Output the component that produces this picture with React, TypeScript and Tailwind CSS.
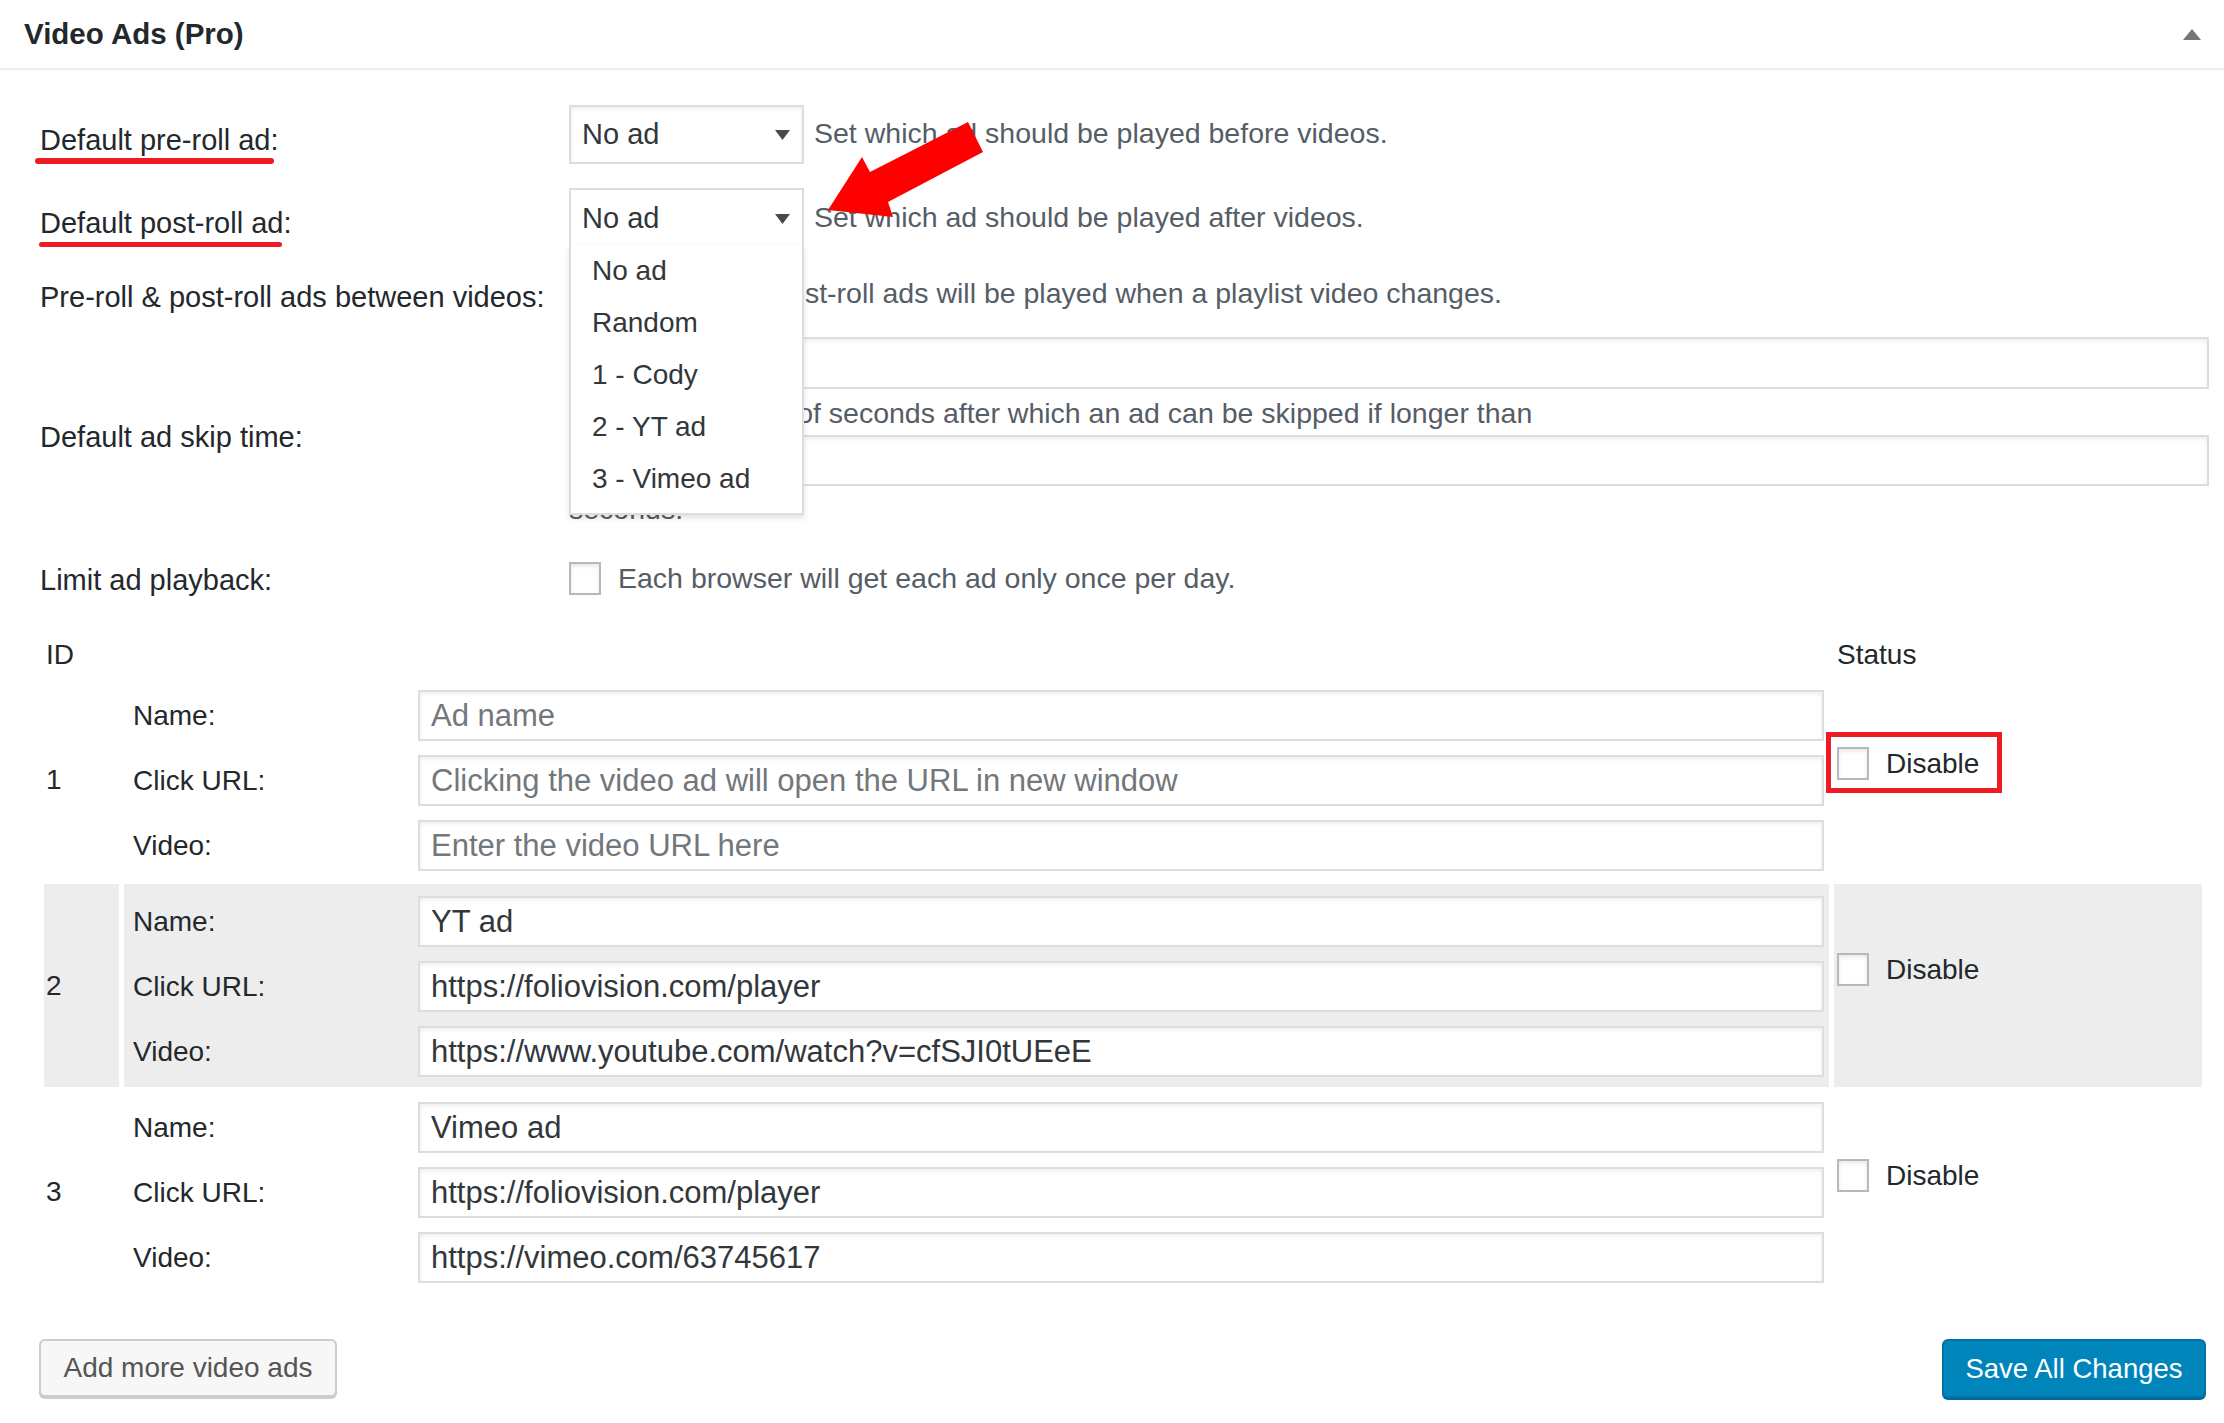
import React from "react";

function Checkbox() {
  return (
    <span className="block h-[33px] w-[32px] shrink-0 border-2 border-[#b4b9be] bg-white shadow-[inset_0_2px_4px_rgba(0,0,0,0.1)]" />
  );
}

function Arrow() {
  return (
    <svg width="15" height="10" viewBox="0 0 15 10" className="shrink-0">
      <polygon points="0,0 15,0 7.5,10" fill="#444a50" />
    </svg>
  );
}

function Field({ value, placeholder }: { value?: string; placeholder?: string }) {
  return (
    <input
      readOnly
      defaultValue={value}
      placeholder={placeholder}
      className="h-[51px] min-w-0 flex-1 border-2 border-[#ddd] bg-white pl-[11px] text-[31px] text-[#32373c] shadow-[inset_0_2px_4px_rgba(0,0,0,0.07)] outline-none placeholder:text-[#72777c]"
    />
  );
}

type Ad = { id: string; name?: string; click?: string; video?: string; gray?: boolean; marked?: boolean };

const ads: Ad[] = [
  { id: "1", marked: true },
  { id: "2", name: "YT ad", click: "https://foliovision.com/player", video: "https://www.youtube.com/watch?v=cfSJI0tUEeE", gray: true },
  { id: "3", name: "Vimeo ad", click: "https://foliovision.com/player", video: "https://vimeo.com/63745617" },
];

function AdRow({ ad }: { ad: Ad }) {
  const bg = ad.gray ? "bg-[#ededed]" : "";
  return (
    <div className="grid grid-cols-[75px_1fr_368px] gap-x-[5px]">
      <div className={`flex items-center pl-[2px] text-[28px] leading-[36px] text-[#23282d] ${bg}`}>{ad.id}</div>
      <div className={`flex flex-col gap-[14px] pb-[10px] pl-[9px] pr-[5px] pt-[12px] ${bg}`}>
        {[
          ["Name:", ad.name, "Ad name"],
          ["Click URL:", ad.click, "Clicking the video ad will open the URL in new window"],
          ["Video:", ad.video, "Enter the video URL here"],
        ].map(([label, value, ph]) => (
          <div key={label} className="flex h-[51px] items-center">
            <span className="w-[285px] shrink-0 text-[28px] leading-[36px] text-[#23282d]">{label}</span>
            <Field value={value} placeholder={ph} />
          </div>
        ))}
      </div>
      <div className={`flex items-center pb-[32px] pl-[3px] ${bg}`}>
        <div className="relative flex h-[36px] items-center gap-[17px]">
          <Checkbox />
          <span className="text-[28px] leading-[36px] text-[#23282d]">Disable</span>
          {ad.marked && (
            <span className="absolute left-[-11px] top-[-14px] h-[61px] w-[176px] border-[5px] border-[#ed1c24]" />
          )}
        </div>
      </div>
    </div>
  );
}

export default function App() {
  return (
    <div className="relative min-h-[1423px] w-full bg-white font-['Liberation_Sans',Arial,sans-serif] antialiased">
      {/* header */}
      <div className="flex h-[70px] items-center justify-between border-b-[2px] border-[#eee] pl-[24px] pr-[23px]">
        <h2 className="text-[29.5px] font-bold leading-[36px] text-[#23282d]">Video Ads (Pro)</h2>
        <svg width="18" height="11" viewBox="0 0 18 11">
          <polygon points="9,0 18,11 0,11" fill="#72777c" />
        </svg>
      </div>

      <div className="pl-[40px] pr-[15px]">
        {/* Row 1 */}
        <div className="mt-[35px] flex h-[59px] items-start">
          <div className="h-[59px] w-[529px] shrink-0 pt-[17px]">
            <span className="relative block w-fit text-[29px] leading-[36px] text-[#23282d]">
              Default pre-roll ad:
              <span className="absolute left-[-5px] top-[36px] h-[6px] w-[239px] rounded-full bg-[#ed1c24]" />
            </span>
          </div>
          <div className="flex items-start">
            <div className="flex h-[59px] w-[235px] items-center justify-between border-2 border-[#ddd] pl-[11px] pr-[12px] text-[29px] text-[#32373c] shadow-[inset_0_2px_4px_rgba(0,0,0,0.07)]">
              <span>No ad</span>
              <Arrow />
            </div>
            <span className="ml-[10px] mt-[10px] text-[28.5px] leading-[36px] text-[#555d66]">
              Set which ad should be played before videos.
            </span>
          </div>
        </div>

        {/* Row 2 */}
        <div className="mt-[24px] flex h-[59px] items-start">
          <div className="h-[59px] w-[529px] shrink-0 pt-[17px]">
            <span className="relative block w-fit text-[29px] leading-[36px] text-[#23282d]">
              Default post-roll ad:
              <span className="absolute left-[-1px] top-[37px] h-[5px] w-[243px] rounded-full bg-[#ed1c24]" />
            </span>
          </div>
          <div className="flex items-start">
            <div className="relative z-10 w-[235px]">
              <div className="flex h-[59px] items-center justify-between border-2 border-b-0 border-[#ddd] bg-white pl-[11px] pr-[12px] text-[29px] text-[#32373c]">
                <span>No ad</span>
                <Arrow />
              </div>
              <ul className="absolute left-0 top-[57px] w-full border-2 border-t-0 border-[#ddd] bg-white pb-[8px] shadow-[0_3px_6px_rgba(0,0,0,0.12)]">
                {["No ad", "Random", "1 - Cody", "2 - YT ad", "3 - Vimeo ad"].map((o) => (
                  <li key={o} className="flex h-[52px] items-center pl-[21px] text-[28px] text-[#32373c]">
                    {o}
                  </li>
                ))}
              </ul>
            </div>
            <span className="ml-[10px] mt-[11px] text-[28.5px] leading-[36px] text-[#555d66]">
              Set which ad should be played after videos.
            </span>
          </div>
        </div>

        {/* Row 3 */}
        <div className="mt-[28px] flex h-[36px] items-start">
          <div className="w-[529px] shrink-0 pt-[4px] text-[29px] leading-[36px] text-[#23282d]">
            Pre-roll &amp; post-roll ads between videos:
          </div>
          <div className="flex h-[36px] items-center gap-[17px]">
            <Checkbox />
            <span className="text-[28.5px] leading-[36px] text-[#555d66]">
              Pre-roll and post-roll ads will be played when a playlist video changes.
            </span>
          </div>
        </div>

        {/* Row 4 */}
        <div className="mt-[26px] flex items-start">
          <div className="w-[529px] shrink-0 pt-[82px] text-[29px] leading-[36px] text-[#23282d]">
            Default ad skip time:
          </div>
          <div className="flex flex-1 flex-col">
            <div className="h-[52px] w-full border-2 border-[#ddd] bg-white shadow-[inset_0_2px_4px_rgba(0,0,0,0.07)]" />
            <span className="mt-[6px] text-[28.5px] leading-[36px] text-[#555d66]">
              Enter the number of seconds after which an ad can be skipped if longer than
            </span>
            <div className="mt-[4px] h-[51px] w-full border-2 border-[#ddd] bg-white shadow-[inset_0_2px_4px_rgba(0,0,0,0.07)]" />
            <span className="mt-[5px] text-[28.5px] leading-[36px] text-[#555d66]">seconds.</span>
          </div>
        </div>

        {/* Row 5 */}
        <div className="mt-[33px] flex h-[36px] items-start">
          <div className="w-[529px] shrink-0 pt-[2px] text-[29px] leading-[36px] text-[#23282d]">
            Limit ad playback:
          </div>
          <div className="flex h-[36px] items-center gap-[17px]">
            <Checkbox />
            <span className="text-[28.5px] leading-[36px] text-[#555d66]">Each browser will get each ad only once per day.</span>
          </div>
        </div>

        {/* Table */}
        <div className="ml-[4px] mr-[7px] mt-[41px]">
          <div className="grid grid-cols-[75px_1fr_368px] gap-x-[5px] text-[28px] leading-[36px] text-[#23282d]">
            <div className="pl-[2px]">ID</div>
            <div />
            <div className="pl-[3px]">Status</div>
          </div>
          <div className="mt-[5px] flex flex-col gap-[3px]">
            {ads.map((ad) => (
              <AdRow key={ad.id} ad={ad} />
            ))}
          </div>
        </div>

        {/* Buttons */}
        <div className="mt-[46px] flex items-start justify-between pb-[24px]">
          <button className="ml-[-1px] h-[58px] w-[298px] rounded-[6px] border-2 border-[#ccc] bg-[#f7f7f7] text-[28px] text-[#555] shadow-[0_2px_0_#ccc]">
            Add more video ads
          </button>
          <button className="mr-[3px] h-[59px] w-[264px] rounded-[6px] border-2 border-[#0073aa] bg-[#0085ba] text-[27.5px] text-white shadow-[0_2px_0_#006799]">
            Save All Changes
          </button>
        </div>
      </div>

      {/* red annotation arrow */}
      <svg
        className="pointer-events-none absolute left-[820px] top-[115px] z-20"
        width="175"
        height="110"
        viewBox="820 115 175 110"
      >
        <polygon
          points="828,210 862,157 870,172 968,122 983,152 888,202 893,217"
          fill="#ff0000"
        />
      </svg>
    </div>
  );
}
